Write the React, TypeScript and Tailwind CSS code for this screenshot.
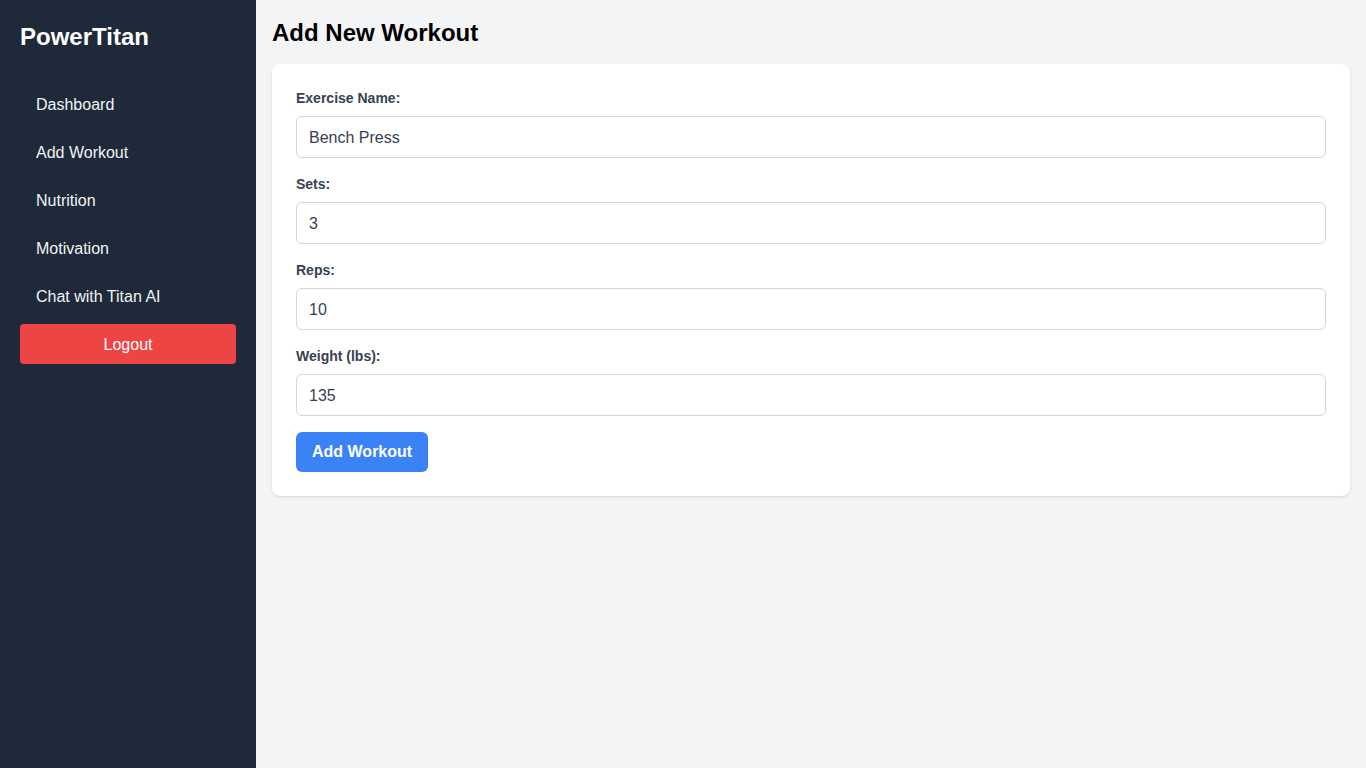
import { useState } from 'react';

const NAV = ['Dashboard', 'Add Workout', 'Nutrition', 'Motivation', 'Chat with Titan AI'];

function Field({ label, value, onChange }: { label: string; value: string; onChange: (v: string) => void }) {
  return (
    <div className="mb-4">
      <label className="block mb-2 text-sm leading-5 font-bold text-gray-700">{label}</label>
      <input
        value={value}
        onChange={(e) => onChange(e.target.value)}
        className="block w-full h-[42px] px-3 pt-[2px] border border-gray-300 rounded-md text-base text-gray-700 bg-white outline-none"
      />
    </div>
  );
}

export default function App() {
  const [name, setName] = useState('Bench Press');
  const [sets, setSets] = useState('3');
  const [reps, setReps] = useState('10');
  const [weight, setWeight] = useState('135');

  return (
    <div className="flex min-h-[768px] font-['Liberation_Sans',Arial,sans-serif]">
      {/* サイドバー */}
      <aside className="w-64 shrink-0 bg-gray-800 p-5 text-white">
        <h1 className="text-2xl leading-8 font-bold pt-px mb-[31px]">PowerTitan</h1>
        <nav className="flex flex-col gap-2">
          {NAV.map((n) => (
            <a key={n} href="#" className="block px-4 pt-[9px] pb-[7px] leading-6 text-base text-gray-100">
              {n}
            </a>
          ))}
          <button type="button" className="h-10 w-full pt-[2px] rounded bg-[#ef4444] text-base text-white">
            Logout
          </button>
        </nav>
      </aside>

      {/* メイン */}
      <main className="flex-1 bg-gray-100 p-4">
        <h2 className="text-2xl leading-8 font-bold text-black pt-px mb-[15px]">Add New Workout</h2>
        <div className="bg-white rounded-lg shadow p-6">
          <Field label="Exercise Name:" value={name} onChange={setName} />
          <Field label="Sets:" value={sets} onChange={setSets} />
          <Field label="Reps:" value={reps} onChange={setReps} />
          <Field label="Weight (lbs):" value={weight} onChange={setWeight} />
          <button type="button" className="h-10 px-4 rounded-md bg-[#3b82f6] text-white font-bold text-base">
            Add Workout
          </button>
        </div>
      </main>
    </div>
  );
}
